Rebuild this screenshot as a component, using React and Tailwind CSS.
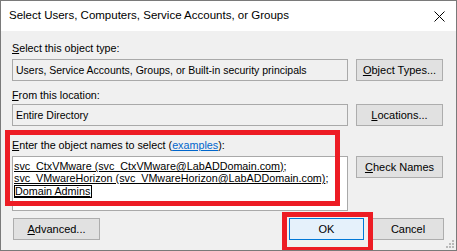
import React from 'react';

const font = { fontFamily: '"Liberation Sans", Arial, sans-serif' };

function Btn({ children, className = '' }) {
  return (
    <div className={`h-[22px] flex items-center justify-center whitespace-nowrap bg-[#e1e1e1] border border-[#adadad] text-[11px] text-black ${className}`}>
      {children}
    </div>
  );
}

function Field({ children }) {
  return (
    <div className="w-[336px] h-[22px] flex items-center px-[3px] whitespace-nowrap bg-[#f0f0f0] border border-[#a9a9a9] text-[10.5px] text-black">
      {children}
    </div>
  );
}

export default function App() {
  return (
    <div style={font} className="relative w-[457px] h-[251px] overflow-hidden border border-[#7a7a7a] bg-[#f0f0f0] flex flex-col">
      {/* Title bar */}
      <div className="h-[30px] shrink-0 bg-white flex items-center justify-between pl-[8px] pr-[10px]">
        <span className="text-[11.5px] text-black whitespace-nowrap">Select Users, Computers, Service Accounts, or Groups</span>
        <svg width="11" height="11" viewBox="0 0 11 11" className="mr-[1px]">
          <path d="M0.5 0.5 L10.5 10.5 M10.5 0.5 L0.5 10.5" stroke="#000" strokeWidth="1" />
        </svg>
      </div>

      {/* Body */}
      <div className="flex-1 pl-[11px] pr-[12px] pt-[10px] text-[10.75px] text-black leading-[14px] whitespace-nowrap">
        <div><span className="underline">S</span>elect this object type:</div>
        <div className="mt-[4px] flex gap-[8px]">
          <Field>Users, Service Accounts, Groups, or Built-in security principals</Field>
          <Btn className="w-[87px]"><span><span className="underline">O</span>bject Types...</span></Btn>
        </div>

        <div className="mt-[7px]"><span className="underline">F</span>rom this location:</div>
        <div className="mt-[2px] flex gap-[8px]">
          <Field>Entire Directory</Field>
          <Btn className="w-[87px]"><span><span className="underline">L</span>ocations...</span></Btn>
        </div>

        <div className="mt-[12px]">
          <span className="underline">E</span>nter the object names to select (<span className="text-[#0066cc] underline">examples</span>):
        </div>
        <div className="mt-[4px] flex gap-[8px] items-start">
          <div className="w-[336px] h-[55px] bg-white border border-[#a9a9a9] pl-[1px] pt-[3px] text-[10.75px] leading-[12px]">
            <div><span className="underline">svc_CtxVMware (svc_CtxVMware@LabADDomain.com)</span>;</div>
            <div><span className="underline">svc_VMwareHorizon (svc_VMwareHorizon@LabADDomain.com)</span>;</div>
            <div className="mt-[1px]"><span className="inline-block border border-black leading-[11px] pr-[1px]"><span className="underline">Domain Admins</span></span></div>
          </div>
          <Btn className="w-[87px]"><span><span className="underline">C</span>heck Names</span></Btn>
        </div>

        <div className="mt-[7px] flex items-center">
          <Btn className="w-[87px] ml-[1px]"><span><span className="underline">A</span>dvanced...</span></Btn>
          <div className="flex-1" />
          <div className="w-[75px] h-[22px] flex items-center justify-center bg-[#e5f1fb] border border-[#0078d7] text-[11px]">OK</div>
          <Btn className="w-[72px] ml-[8px]">Cancel</Btn>
        </div>
      </div>

      {/* Annotation overlays */}
      <div className="absolute left-[4px] top-[129px] w-[335px] h-[76px] border-[5px] border-[#ed1c24] pointer-events-none" />
      <div className="absolute left-[281px] top-[211px] w-[91px] h-[40px] border-[5px] border-[#ed1c24] pointer-events-none" />

      {/* Resize grip */}
      <svg className="absolute right-[1px] bottom-[1px]" width="9" height="9" viewBox="0 0 9 9">
        <rect x="6" y="0" width="2" height="2" fill="#b9b9b9" />
        <rect x="3" y="3" width="2" height="2" fill="#b9b9b9" />
        <rect x="6" y="3" width="2" height="2" fill="#b9b9b9" />
        <rect x="0" y="6" width="2" height="2" fill="#b9b9b9" />
        <rect x="3" y="6" width="2" height="2" fill="#b9b9b9" />
        <rect x="6" y="6" width="2" height="2" fill="#b9b9b9" />
      </svg>
    </div>
  );
}
